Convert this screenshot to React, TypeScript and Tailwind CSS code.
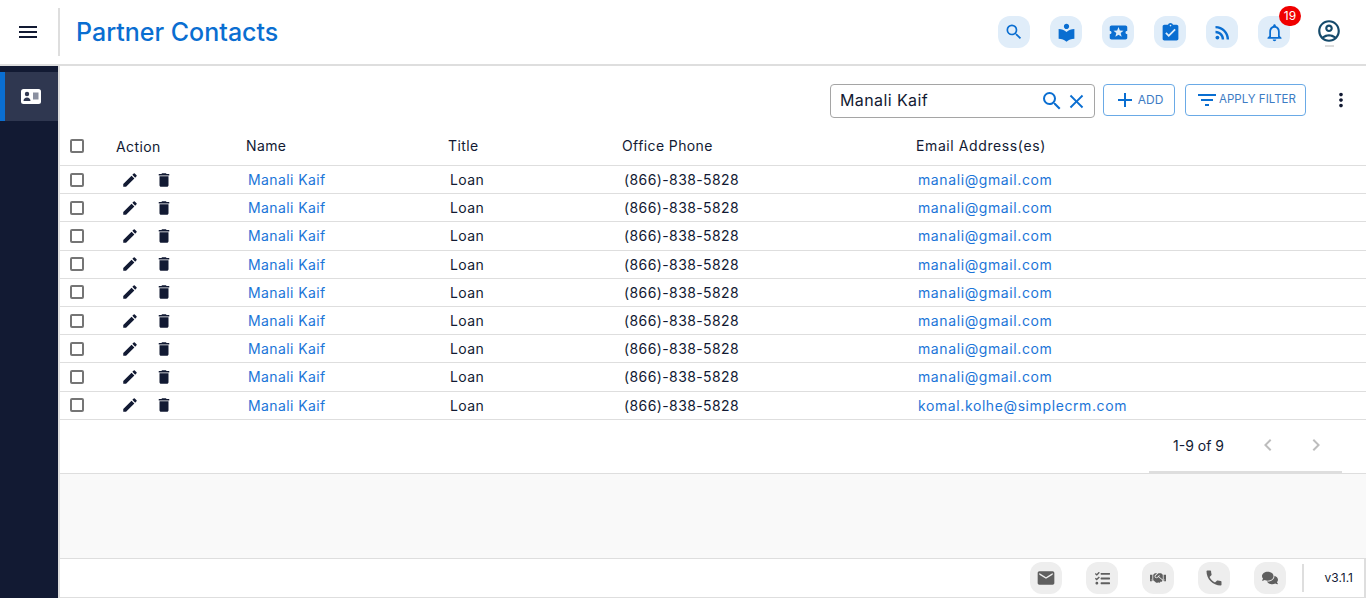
import { FaComments, FaHandshake, FaTasks } from 'react-icons/fa'
import {
  MdAdd,
  MdAssignmentTurnedIn,
  MdChevronLeft,
  MdChevronRight,
  MdClose,
  MdDelete,
  MdEdit,
  MdEmail,
  MdFilterList,
  MdLocalActivity,
  MdLocalLibrary,
  MdMenu,
  MdMoreVert,
  MdNotificationsNone,
  MdOutlineAccountCircle,
  MdPhone,
  MdRssFeed,
  MdSearch,
} from 'react-icons/md'

const topIcons = [MdSearch, MdLocalLibrary, MdLocalActivity, MdAssignmentTurnedIn, MdRssFeed]
const footerIcons = [
  { Icon: MdEmail, size: 20 },
  { Icon: FaTasks, size: 15 },
  { Icon: FaHandshake, size: 16 },
  { Icon: MdPhone, size: 20 },
  { Icon: FaComments, size: 16 },
]

const rows = Array.from({ length: 9 }, (_, i) => ({
  name: 'Manali Kaif',
  title: 'Loan',
  phone: '(866)-838-5828',
  email: i === 8 ? 'komal.kolhe@simplecrm.com' : 'manali@gmail.com',
}))

const gridCols = 'grid grid-cols-[56px_130px_202px_174px_294px_1fr] items-center'

function Checkbox() {
  return <span className="block h-[14px] w-[14px] rounded-[2px] border-2 border-[#757575] bg-white" />
}

function ContactCard() {
  return (
    <svg width="20" height="15" viewBox="0 0 20 15">
      <rect width="20" height="15" rx="2.5" fill="#fff" />
      <circle cx="6" cy="5" r="2.2" fill="#2f3750" />
      <path d="M2.5 12c0-2.4 1.6-3.6 3.5-3.6s3.5 1.2 3.5 3.6z" fill="#2f3750" />
      <rect x="12" y="3.5" width="5.5" height="7" fill="#8b90a0" />
    </svg>
  )
}

export default function App() {
  return (
    <div className="flex h-[598px] w-[1366px] flex-col overflow-hidden bg-white font-['Inter',sans-serif] text-[#121a33]">
      <header className="flex h-[66px] shrink-0 items-center border-b-2 border-[#dedede]">
        <div className="flex h-[48px] w-[60px] shrink-0 items-center border-r-2 border-[#dedede] pl-[16px]">
          <MdMenu size={24} />
        </div>
        <h1 className="ml-[16px] text-[25px] font-medium leading-none text-[#0a6ed1]">Partner Contacts</h1>
        <div className="ml-auto flex items-center gap-[20px] pr-[76px]">
          {topIcons.map((Icon, i) => (
            <span key={i} className="flex h-[32px] w-[32px] items-center justify-center rounded-[12px] bg-[#e0edf9] text-[#0a6ed1]">
              <Icon size={i === 0 ? 20 : 21} />
            </span>
          ))}
          <span className="relative flex h-[32px] w-[32px] items-center justify-center rounded-[12px] bg-[#e0edf9] text-[#0a6ed1]">
            <MdNotificationsNone size={21} />
            <span className="absolute -right-[11px] -top-[10px] flex h-[20px] w-[22px] items-center justify-center rounded-full bg-[#f00000] text-[12px] text-white">
              19
            </span>
          </span>
        </div>
        <div className="absolute left-[1316px] top-[18px] flex flex-col items-center">
          <MdOutlineAccountCircle size={26} className="text-[#154a6b]" />
          <span className="mt-[1px] h-[2px] w-[9px] bg-[#dcdcdc]" />
        </div>
      </header>

      <div className="flex min-h-0 flex-1">
        <aside className="w-[60px] shrink-0 border-r-2 border-[#dedede] bg-[#121a33] pt-[6px]">
          <div className="flex h-[49px] items-center justify-center border-l-[5px] border-[#0a6ed1] bg-[#2f3750] pr-[1px]">
            <ContactCard />
          </div>
        </aside>

        <main className="flex min-w-0 flex-1 flex-col">
          <div className="flex h-[62px] shrink-0 items-start pt-[18px]">
            <div className="ml-[770px] flex h-[34px] w-[265px] items-center rounded-[4px] border border-[#a5a5a5] pl-[9px] pr-[6px] text-[16px] tracking-[0.4px]">
              <span className="-mt-[2px]">Manali Kaif</span>
              <MdSearch size={24} className="ml-auto text-[#0a6ed1]" />
              <MdClose size={23} className="ml-[1px] text-[#0a6ed1]" />
            </div>
            <button className="ml-[8px] flex h-[32px] w-[72px] items-center justify-center gap-[1px] rounded-[4px] border border-[#6aaae6] pr-[2px] text-[12px] text-[#3d7cc4]">
              <MdAdd size={24} className="text-[#0a6ed1]" />
              ADD
            </button>
            <button className="ml-[10px] flex h-[32px] w-[121px] items-center justify-center rounded-[4px] border border-[#6aaae6] text-[11.5px] text-[#3d7cc4]">
              <MdFilterList size={24} className="text-[#0a6ed1]" />
              APPLY FILTER
            </button>
            <MdMoreVert size={22} className="ml-[24px] mt-[5px]" />
          </div>

          <div className={`${gridCols} h-[38px] shrink-0 border-b border-[#dedede] pb-[2px] text-[14px] tracking-[0.4px]`}>
            <div className="pl-[10px]">
              <Checkbox />
            </div>
            <div className="pt-[2px]">Action</div>
            <div>Name</div>
            <div>Title</div>
            <div>Office Phone</div>
            <div className="tracking-[0.6px]">Email Address(es)</div>
          </div>

          {rows.map((row, i) => (
            <div key={i} className={`${gridCols} h-[28.2px] shrink-0 border-b border-[#dedede] text-[14px] tracking-[0.4px]`}>
              <div className="pl-[10px]">
                <Checkbox />
              </div>
              <div className="flex items-center gap-[16px] pl-[5px]">
                <MdEdit size={18} />
                <MdDelete size={18} />
              </div>
              <div className="pl-[2px] text-[#1c75d8]">{row.name}</div>
              <div className="pl-[2px]">{row.title}</div>
              <div className="pl-[2px]">{row.phone}</div>
              <div className="pl-[2px] tracking-[0.6px] text-[#1c75d8]">{row.email}</div>
            </div>
          ))}

          <div className="flex h-[54px] shrink-0 border-b border-[#dedede]">
            <div className="ml-[1089px] flex h-[53px] w-[193px] items-center border-b-2 border-[#dedede] pl-[24px] text-[14px]">
              <span className="w-[83px]">1-9 of 9</span>
              <MdChevronLeft size={24} className="text-[#bdbdbd]" />
              <MdChevronRight size={24} className="ml-[24px] text-[#bdbdbd]" />
            </div>
          </div>

          <div className="min-h-0 flex-1 bg-[#f9f9f9]" />

          <footer className="flex h-[40px] shrink-0 items-center border-y border-r-2 border-[#dedede] bg-white">
            <div className="ml-auto flex items-center gap-[24px]">
              {footerIcons.map(({ Icon, size }, i) => (
                <span key={i} className="flex h-[32px] w-[32px] items-center justify-center rounded-[12px] bg-[#eeeeee] text-[#5f5f5f]">
                  <Icon size={size} />
                </span>
              ))}
            </div>
            <div className="ml-[16px] flex h-[28px] w-[62px] items-center justify-end border-l-2 border-[#dedede] pr-[11px] text-[12px]">
              v3.1.1
            </div>
          </footer>
        </main>
      </div>
    </div>
  )
}
